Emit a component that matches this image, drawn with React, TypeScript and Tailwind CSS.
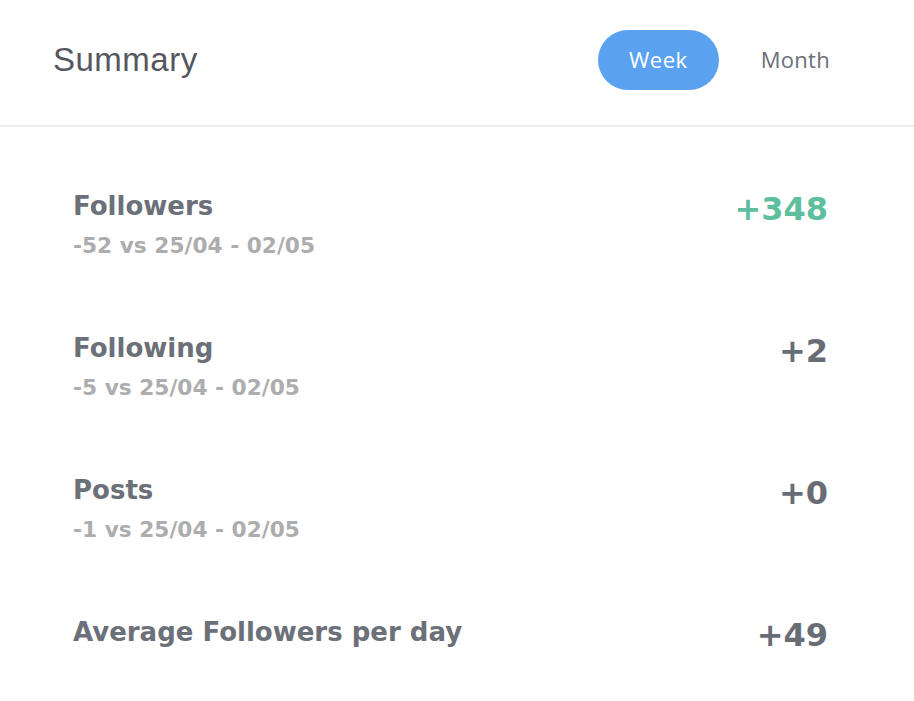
const stats = [
  { label: "Followers", sub: "-52 vs 25/04 - 02/05", value: "+348", positive: true },
  { label: "Following", sub: "-5 vs 25/04 - 02/05", value: "+2", positive: false },
  { label: "Posts", sub: "-1 vs 25/04 - 02/05", value: "+0", positive: false },
  { label: "Average Followers per day", sub: "", value: "+49", positive: false },
];

export default function App() {
  return (
    <div className="w-full bg-white font-['DejaVu_Sans',sans-serif]">
      <header className="flex h-[127px] items-center justify-between border-b-2 border-[#ececef] px-[53px] pb-[6px]">
        <h1 className="font-['Liberation_Sans',Arial,sans-serif] text-[33px] tracking-[0.5px] text-[#55575f]">
          Summary
        </h1>
        <div className="flex items-center font-['Open_Sans',sans-serif]">
          <button className="h-[60px] rounded-full bg-[#5aa2f0] px-[31px] text-[22px] tracking-[0.5px] text-white">
            Week
          </button>
          <button className="ml-[11px] h-[60px] rounded-full px-[31px] text-[22px] tracking-[0.3px] text-[#6c6f78]">
            Month
          </button>
        </div>
      </header>

      <main className="flex flex-col gap-[70px] pb-[40px] pl-[73px] pr-[86px] pt-[61px]">
        {stats.map((s) => (
          <div key={s.label} className="flex items-start justify-between">
            <div className="flex flex-col">
              <span className="text-[26px] font-bold leading-[36px] text-[#6b7079]">{s.label}</span>
              {s.sub && (
                <span className="mt-[7px] text-[21.7px] font-bold leading-[29px] text-[#adadad]">
                  {s.sub}
                </span>
              )}
            </div>
            <span
              className={
                s.positive
                  ? "text-[32px] font-bold leading-[42px] text-[#5dbf9d]"
                  : "text-[32px] font-bold leading-[42px] text-[#686c75]"
              }
            >
              {s.value}
            </span>
          </div>
        ))}
      </main>
    </div>
  );
}
